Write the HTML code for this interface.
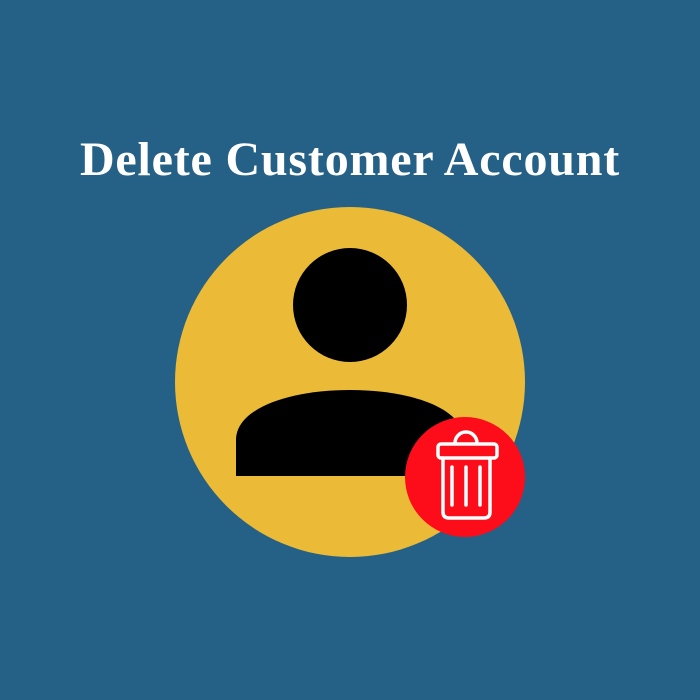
<!DOCTYPE html>
<html><head><style>
html,body{margin:0;padding:0}
body{width:700px;height:700px;background:#256086;position:relative;overflow:hidden}
h1{position:absolute;top:132px;left:0;width:700px;margin:0;text-align:center;color:#fff;font:bold 48px/56px "Liberation Serif",serif;letter-spacing:0.8px}
svg{position:absolute;left:0;top:0}
</style></head><body>
<h1>Delete Customer Account</h1>
<svg width="700" height="700">
<circle cx="350" cy="382" r="175" fill="#ebbb38"/>
<circle cx="350" cy="305" r="57" fill="#000"/>
<path d="M236 476 V440 C236 408 290 390 350 390 C410 390 464 408 464 440 V476 Z" fill="#000"/>
<circle cx="465" cy="477" r="60" fill="#fd0c1a"/>
<g fill="none" stroke="#fff" stroke-width="3.5" stroke-linejoin="round" stroke-linecap="round">
<path d="M455 443 A11 11 0 0 1 477 443"/>
<rect x="438" y="444" width="59" height="14" rx="3"/>
<path d="M443 458 V512 Q443 518 449 518 H484 Q490 518 490 512 V458"/>
<path d="M452 467 V505 M466 467 V505 M480 467 V505"/>
</g>
</svg>
</body></html>
